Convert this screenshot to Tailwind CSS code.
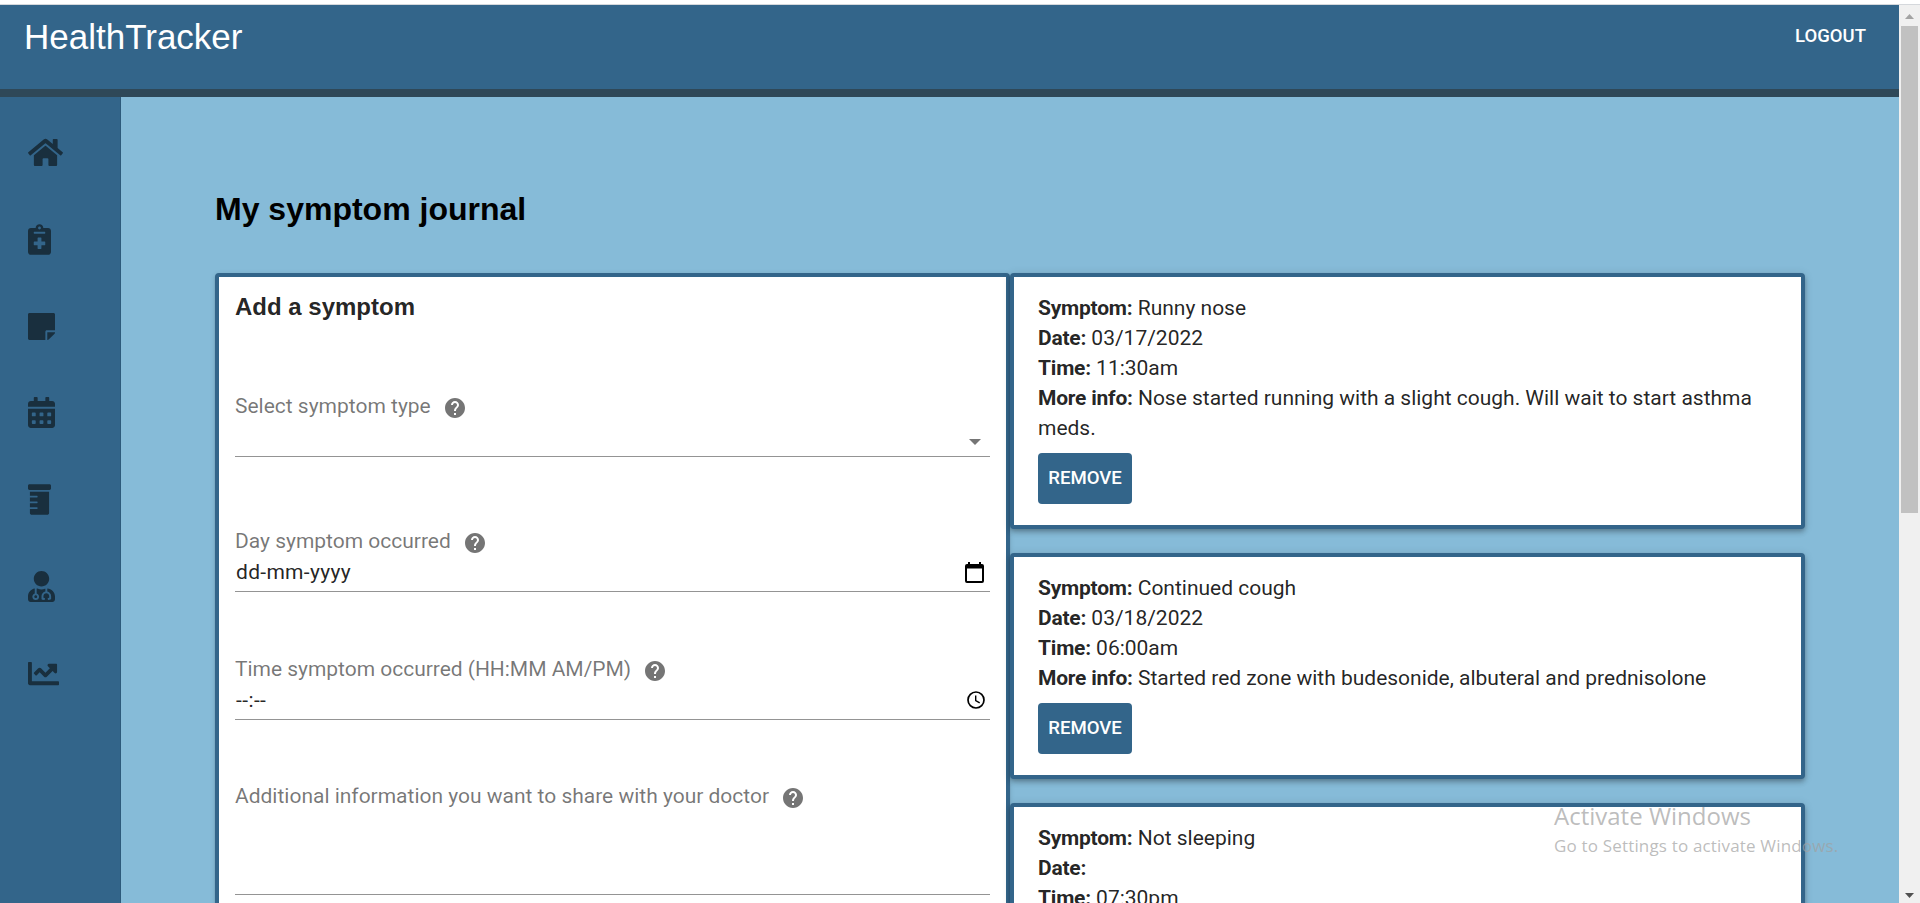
<!DOCTYPE html>
<html lang="en">
<head>
<meta charset="utf-8">
<title>HealthTracker</title>
<script src="https://cdn.jsdelivr.net/npm/@tailwindcss/browser@4"></script>
</head>
<body class="h-[903px] overflow-hidden bg-white font-[Roboto,sans-serif]">
<div class="flex h-[903px] flex-col overflow-hidden pt-1">
  <div class="flex min-h-0 flex-1 border-t border-[#d5d8dc]">
    <div class="flex min-w-0 flex-1 flex-col">
      <header class="flex h-[92px] shrink-0 items-start justify-between border-b-8 border-[#2f4858] bg-[#33658a] pl-6 pr-[33px] text-white">
        <a class="mt-3 font-['Liberation_Sans',sans-serif] text-[35px] leading-[40px]">HealthTracker</a>
        <button class="mt-[18px] text-[18.5px] leading-[27px] font-medium">LOGOUT</button>
      </header>
      <div class="flex min-h-0 flex-1">
        <nav class="flex w-[121px] shrink-0 flex-col gap-[55.8px] border-r border-[#2d5a7b] bg-[#33658a] pl-7 pt-10 text-[#192f3e]">
          <svg class="h-[31px] w-[35px] shrink-0" viewBox="0 0 576 512" fill="currentColor"><path d="M280.37 148.26L96 300.11V464a16 16 0 0 0 16 16l112.06-.29a16 16 0 0 0 15.92-16V368a16 16 0 0 1 16-16h64a16 16 0 0 1 16 16v95.64a16 16 0 0 0 16 16.05L464 480a16 16 0 0 0 16-16V300L295.67 148.26a12.19 12.19 0 0 0-15.3 0zM571.6 251.47L488 182.56V44.05a12 12 0 0 0-12-12h-56a12 12 0 0 0-12 12v72.61L318.47 43a48 48 0 0 0-61 0L4.34 251.47a12 12 0 0 0-1.6 16.9l25.5 31A12 12 0 0 0 45.15 301l235.22-193.74a12.19 12.19 0 0 1 15.3 0L530.9 301a12 12 0 0 0 16.9-1.6l25.5-31a12 12 0 0 0-1.7-16.93z"/></svg>
          <svg class="h-[31px] w-[23px] shrink-0" viewBox="0 0 384 512" fill="currentColor" fill-rule="evenodd"><path d="M336 64h-80c0-35.3-28.7-64-64-64s-64 28.7-64 64H48C21.5 64 0 85.5 0 112v352c0 26.5 21.5 48 48 48h288c26.5 0 48-21.5 48-48V112c0-26.5-21.5-48-48-48zM192 40c13.3 0 24 10.7 24 24s-10.7 24-24 24-24-10.7-24-24 10.7-24 24-24zm96 304c0 4.4-3.6 8-8 8h-56v56c0 4.4-3.6 8-8 8h-48c-4.4 0-8-3.6-8-8v-56h-56c-4.4 0-8-3.6-8-8v-48c0-4.4 3.6-8 8-8h56v-56c0-4.4 3.6-8 8-8h48c4.4 0 8 3.6 8 8v56h56c4.4 0 8 3.6 8 8v48zm0-192c0 4.4-3.6 8-8 8H104c-4.4 0-8-3.6-8-8v-16c0-4.4 3.6-8 8-8h176c4.4 0 8 3.6 8 8v16z"/></svg>
          <svg class="h-[31px] w-[27px] shrink-0" viewBox="0 0 448 512" fill="currentColor"><path d="M312 320h136V56c0-13.3-10.7-24-24-24H24C10.7 32 0 42.7 0 56v400c0 13.3 10.7 24 24 24h264V344c0-13.2 10.8-24 24-24zm129 55l-98 98c-4.5 4.5-10.6 7-17 7h-6V352h128v6.1c0 6.3-2.5 12.4-7 16.9z"/></svg>
          <svg class="h-[31px] w-[27px] shrink-0" viewBox="0 0 448 512" fill="currentColor" fill-rule="evenodd"><path d="M0 464c0 26.5 21.5 48 48 48h352c26.5 0 48-21.5 48-48V192H0v272zM332 256h40q12 0 12 12v40q0 12-12 12h-40q-12 0-12-12v-40q0-12 12-12zM332 384h40q12 0 12 12v40q0 12-12 12h-40q-12 0-12-12v-40q0-12 12-12zM204 256h40q12 0 12 12v40q0 12-12 12h-40q-12 0-12-12v-40q0-12 12-12zM204 384h40q12 0 12 12v40q0 12-12 12h-40q-12 0-12-12v-40q0-12 12-12zM76 256h40q12 0 12 12v40q0 12-12 12H76q-12 0-12-12v-40q0-12 12-12zM76 384h40q12 0 12 12v40q0 12-12 12H76q-12 0-12-12v-40q0-12 12-12zM400 64h-48V16c0-8.8-7.2-16-16-16h-32c-8.8 0-16 7.2-16 16v48H160V16c0-8.8-7.2-16-16-16h-32c-8.8 0-16 7.2-16 16v48H48C21.5 64 0 85.5 0 112v48h448v-48c0-26.5-21.5-48-48-48z"/></svg>
          <svg class="h-[31px] w-[23px] shrink-0" viewBox="0 0 384 512" fill="currentColor"><path d="M32 192h120c4.4 0 8 3.6 8 8v16c0 4.4-3.6 8-8 8H32v64h120c4.4 0 8 3.6 8 8v16c0 4.4-3.6 8-8 8H32v64h120c4.4 0 8 3.6 8 8v16c0 4.4-3.6 8-8 8H32v64c0 17.6 14.4 32 32 32h256c17.6 0 32-14.4 32-32V128H32v64zM360 0H24C10.8 0 0 10.8 0 24v48c0 13.2 10.8 24 24 24h336c13.2 0 24-10.8 24-24V24c0-13.2-10.8-24-24-24z"/></svg>
          <svg class="h-[31px] w-[27px] shrink-0" viewBox="0 0 448 512" fill="currentColor"><path d="M224 256c70.7 0 128-57.3 128-128S294.7 0 224 0 96 57.3 96 128s57.3 128 128 128zM104 424c0 13.3 10.7 24 24 24s24-10.7 24-24-10.7-24-24-24-24 10.7-24 24zm216-135.4v49c36.5 7.4 64 39.8 64 78.4v41.7c0 7.6-5.4 14.2-12.9 15.7l-32.2 6.4c-4.3.9-8.5-1.9-9.4-6.3l-3.1-15.7c-.9-4.3 1.9-8.6 6.3-9.4l19.3-3.9V416c0-62.8-96-65.1-96 1.9v26.7l19.3 3.9c4.3.9 7.1 5.1 6.3 9.4l-3.1 15.7c-.9 4.3-5.1 7.1-9.4 6.3l-31.2-4.2c-7.9-1.1-13.8-7.8-13.8-15.9V416c0-38.6 27.5-70.9 64-78.4v-45.2c-2.2.7-4.4 1.1-6.6 1.9-18 6.3-37.3 9.8-57.4 9.8s-39.4-3.5-57.4-9.8c-7.4-2.6-14.9-4.2-22.6-5.2v81.6c23.1 6.9 40 28.1 40 53.4 0 30.9-25.1 56-56 56s-56-25.1-56-56c0-25.3 16.9-46.5 40-53.4v-80.4C48.5 301 0 355.8 0 422.4v44.8C0 491.9 20.1 512 44.8 512h358.4c24.7 0 44.8-20.1 44.8-44.8v-44.8c0-72-56.8-130.3-128-133.8z"/></svg>
          <svg class="h-[31px] w-[31px] shrink-0" viewBox="0 0 512 512" fill="currentColor"><path d="M496 384H64V80c0-8.84-7.16-16-16-16H16C7.16 64 0 71.16 0 80v336c0 17.67 14.33 32 32 32h464c8.84 0 16-7.16 16-16v-32c0-8.84-7.16-16-16-16zM464 96H345.94c-21.38 0-32.09 25.85-16.97 40.97l32.4 32.4L288 242.75l-73.37-73.37c-12.5-12.5-32.76-12.5-45.25 0l-68.69 68.69c-6.25 6.25-6.25 16.38 0 22.63l22.62 22.62c6.25 6.25 16.38 6.25 22.63 0L192 237.25l73.37 73.37c12.5 12.5 32.76 12.5 45.25 0l96-96 32.4 32.4c15.12 15.12 40.97 4.41 40.97-16.97V112c.01-8.84-7.15-16-15.99-16z"/></svg>
        </nav>
        <main class="min-w-0 flex-1 bg-[#86bbd8] pl-[94px] pt-[92px]">
          <h1 class="font-['Liberation_Sans',sans-serif] text-[32px] leading-[40px] font-bold text-black">My symptom journal</h1>
          <div class="mt-11 flex items-start">
            <section class="h-[900px] w-[795px] rounded border-4 border-[#33658a] bg-white px-4 pt-[14px] text-[21px] text-black/54 shadow-[0_3px_1px_-2px_rgba(0,0,0,0.2),0_2px_2px_0_rgba(0,0,0,0.14),0_1px_5px_0_rgba(0,0,0,0.12)]">
              <h2 class="font-['Liberation_Sans',sans-serif] text-[24px] leading-8 font-bold text-black/87">Add a symptom</h2>
              <div class="mt-[71px] flex h-[63px] flex-col border-b border-[#949494]">
                <label class="flex h-6 items-start gap-3 leading-6 tracking-[-0.01px]">Select symptom type
                  <svg class="mt-[2px] h-6 w-6" viewBox="0 0 24 24" fill="#757575"><path d="M12 2C6.48 2 2 6.48 2 12s4.48 10 10 10 10-4.48 10-10S17.52 2 12 2zm1 17h-2v-2h2v2zm2.07-7.75l-.9.92C13.45 12.9 13 13.5 13 15h-2v-.5c0-1.1.45-2.1 1.17-2.83l1.24-1.26c.37-.36.59-.86.59-1.41 0-1.1-.9-2-2-2s-2 .9-2 2H8c0-2.21 1.79-4 4-4s4 1.79 4 4c0 .88-.36 1.68-.93 2.25z"/></svg>
                </label>
                <svg class="mt-[21px] mr-[9px] h-[6px] w-3 self-end" viewBox="0 0 12 6" fill="#757575"><path d="M0 0h12L6 6z"/></svg>
              </div>
              <div class="mt-[72px] flex h-[63px] flex-col border-b border-[#949494]">
                <label class="flex h-6 items-start gap-3 leading-6 tracking-[-0.01px]">Day symptom occurred
                  <svg class="mt-[2px] h-6 w-6" viewBox="0 0 24 24" fill="#757575"><path d="M12 2C6.48 2 2 6.48 2 12s4.48 10 10 10 10-4.48 10-10S17.52 2 12 2zm1 17h-2v-2h2v2zm2.07-7.75l-.9.92C13.45 12.9 13 13.5 13 15h-2v-.5c0-1.1.45-2.1 1.17-2.83l1.24-1.26c.37-.36.59-.86.59-1.41 0-1.1-.9-2-2-2s-2 .9-2 2H8c0-2.21 1.79-4 4-4s4 1.79 4 4c0 .88-.36 1.68-.93 2.25z"/></svg>
                </label>
                <div class="mt-[7px] flex items-center justify-between pl-px pr-[6px] leading-6 text-black/87"><span class="tracking-[0.3px]">dd-mm-yyyy</span>
                  <svg class="h-[21px] w-[19px]" viewBox="0 0 19 21" fill="#000"><path fill-rule="evenodd" d="M2 2h1V0h2v2h9V0h2v2h1q2 0 2 2v15q0 2-2 2H2q-2 0-2-2V4q0-2 2-2zM2 6.5v12.5h15V6.5z"/></svg>
                </div>
              </div>
              <div class="mt-[65px] flex h-[63px] flex-col border-b border-[#949494]">
                <label class="flex h-6 items-start gap-3 leading-6 tracking-[-0.03px]">Time symptom occurred (HH:MM AM/PM)
                  <svg class="mt-[2px] h-6 w-6" viewBox="0 0 24 24" fill="#757575"><path d="M12 2C6.48 2 2 6.48 2 12s4.48 10 10 10 10-4.48 10-10S17.52 2 12 2zm1 17h-2v-2h2v2zm2.07-7.75l-.9.92C13.45 12.9 13 13.5 13 15h-2v-.5c0-1.1.45-2.1 1.17-2.83l1.24-1.26c.37-.36.59-.86.59-1.41 0-1.1-.9-2-2-2s-2 .9-2 2H8c0-2.21 1.79-4 4-4s4 1.79 4 4c0 .88-.36 1.68-.93 2.25z"/></svg>
                </label>
                <div class="mt-[7px] flex items-center justify-between pl-px pr-[5px] leading-6 text-black/87"><span class="tracking-[0.4px]">--:--</span>
                  <svg class="h-[18px] w-[18px]" viewBox="0 0 18 18" fill="none" stroke="#000" stroke-width="1.7"><circle cx="9" cy="9" r="8"/><path d="M8.7 4.5v5l4 2.4" stroke-width="1.4"/></svg>
                </div>
              </div>
              <div class="mt-[64px] flex h-[111px] flex-col border-b border-[#949494]">
                <label class="flex h-6 items-start gap-3 leading-6 tracking-[-0.01px]">Additional information you want to share with your doctor
                  <svg class="mt-[2px] h-6 w-6" viewBox="0 0 24 24" fill="#757575"><path d="M12 2C6.48 2 2 6.48 2 12s4.48 10 10 10 10-4.48 10-10S17.52 2 12 2zm1 17h-2v-2h2v2zm2.07-7.75l-.9.92C13.45 12.9 13 13.5 13 15h-2v-.5c0-1.1.45-2.1 1.17-2.83l1.24-1.26c.37-.36.59-.86.59-1.41 0-1.1-.9-2-2-2s-2 .9-2 2H8c0-2.21 1.79-4 4-4s4 1.79 4 4c0 .88-.36 1.68-.93 2.25z"/></svg>
                </label>
              </div>
            </section>
            <section class="flex w-[795px] flex-col gap-6 text-[21px] leading-[30px] tracking-[-0.01px] text-black/87">
              <article class="h-[256px] rounded border-4 border-[#33658a] bg-white px-6 pt-4 shadow-[0_2px_4px_-1px_rgba(0,0,0,0.2),0_4px_5px_0_rgba(0,0,0,0.14),0_1px_10px_0_rgba(0,0,0,0.12)]">
                <p><b class="tracking-[-0.22px]">Symptom:</b> Runny nose</p>
                <p><b class="tracking-[-0.22px]">Date:</b> 03/17/2022</p>
                <p><b class="tracking-[-0.22px]">Time:</b> 11:30am</p>
                <p><b class="tracking-[-0.22px]">More info:</b> Nose started running with a slight cough. Will wait to start asthma meds.</p>
                <button class="mt-[10px] flex h-[51px] w-[94px] items-center justify-center rounded bg-[#33658a] pb-[2px] text-[18.6px] font-medium text-white">REMOVE</button>
              </article>
              <article class="h-[226px] rounded border-4 border-[#33658a] bg-white px-6 pt-4 shadow-[0_2px_4px_-1px_rgba(0,0,0,0.2),0_4px_5px_0_rgba(0,0,0,0.14),0_1px_10px_0_rgba(0,0,0,0.12)]">
                <p><b class="tracking-[-0.22px]">Symptom:</b> Continued cough</p>
                <p><b class="tracking-[-0.22px]">Date:</b> 03/18/2022</p>
                <p><b class="tracking-[-0.22px]">Time:</b> 06:00am</p>
                <p><b class="tracking-[-0.22px]">More info:</b> Started red zone with budesonide, albuteral and prednisolone</p>
                <button class="mt-[10px] flex h-[51px] w-[94px] items-center justify-center rounded bg-[#33658a] pb-[2px] text-[18.6px] font-medium text-white">REMOVE</button>
              </article>
              <article class="h-[226px] rounded border-4 border-[#33658a] bg-white px-6 pt-4 shadow-[0_2px_4px_-1px_rgba(0,0,0,0.2),0_4px_5px_0_rgba(0,0,0,0.14),0_1px_10px_0_rgba(0,0,0,0.12)]">
                <p><b class="tracking-[-0.22px]">Symptom:</b> Not sleeping</p>
                <p><b class="tracking-[-0.22px]">Date:</b></p>
                <p><b class="tracking-[-0.22px]">Time:</b> 07:30pm</p>
              </article>
            </section>
          </div>
        </main>
      </div>
    </div>
    <div class="flex w-[21px] shrink-0 flex-col items-center bg-[#f0f0f0]">
      <svg class="mt-[9px] h-[5px] w-[9px] shrink-0" viewBox="0 0 9 5" fill="#a3a3a3"><path d="M0 5h9L4.5 0z"/></svg>
      <div class="mt-[7px] h-[487px] w-[17px] shrink-0 bg-[#c1c1c1]"></div>
      <svg class="mt-auto mb-[5px] h-[5px] w-[9px] shrink-0" viewBox="0 0 9 5" fill="#505050"><path d="M0 0h9L4.5 5z"/></svg>
    </div>
  </div>
</div>
<div class="absolute left-[1554px] top-[799px] font-['Open_Sans',sans-serif] text-[#a0a0a0]/70">
  <p class="text-[24px] leading-[34px] whitespace-nowrap">Activate Windows</p>
  <p class="text-[17px] leading-[26px] tracking-[0.17px] whitespace-nowrap">Go to Settings to activate Windows.</p>
</div>
</body>
</html>
